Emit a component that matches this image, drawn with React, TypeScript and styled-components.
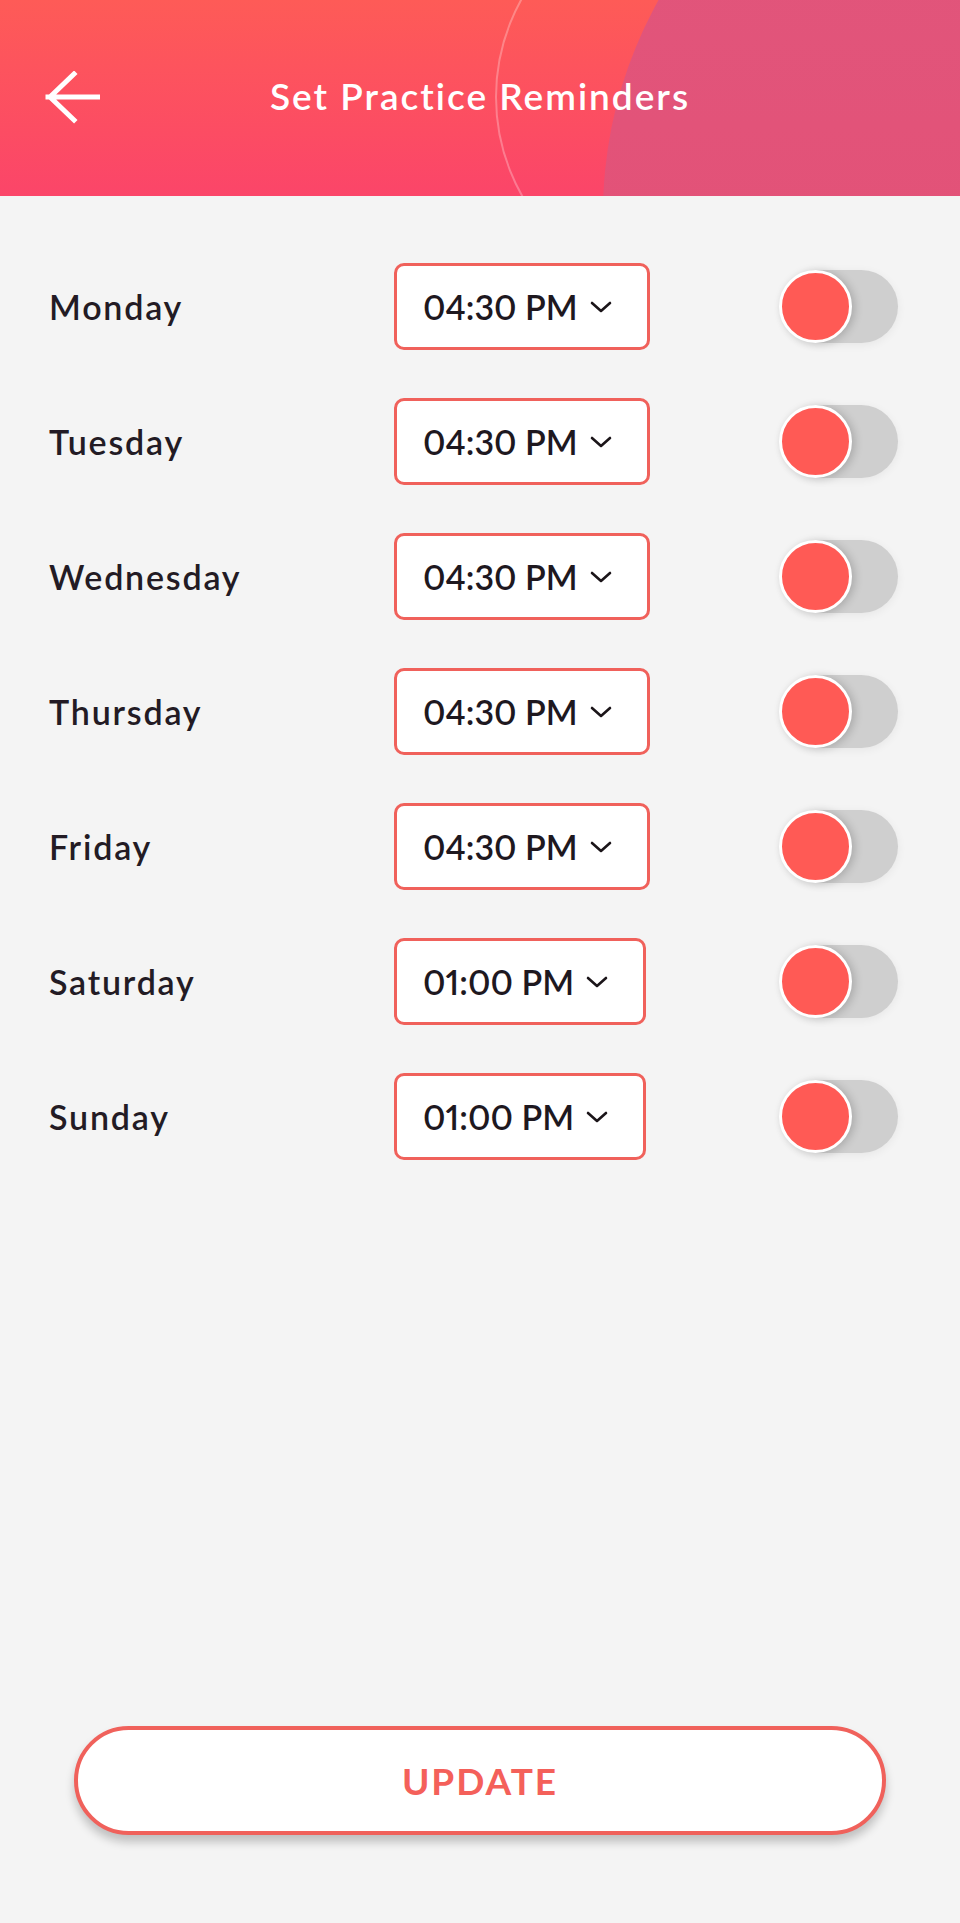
import React, { useState } from 'react'
import styled, { createGlobalStyle } from 'styled-components'

const GlobalStyle = createGlobalStyle`
  html, body {
    margin: 0;
    padding: 0;
    background: #f4f4f4;
  }
  * {
    box-sizing: border-box;
  }
`

type Reminder = {
  day: string
  time: string
  on: boolean
}

const initialReminders: Reminder[] = [
  { day: 'Monday', time: '04:30 PM', on: false },
  { day: 'Tuesday', time: '04:30 PM', on: false },
  { day: 'Wednesday', time: '04:30 PM', on: false },
  { day: 'Thursday', time: '04:30 PM', on: false },
  { day: 'Friday', time: '04:30 PM', on: false },
  { day: 'Saturday', time: '01:00 PM', on: false },
  { day: 'Sunday', time: '01:00 PM', on: false },
]

const BackArrow: React.FC = () => (
  <svg width="56" height="56" viewBox="0 0 56 56" fill="none">
    <path
      d="M54 26H4M30 3L6 26L30 49"
      stroke="#fff"
      strokeWidth="5"
      strokeLinecap="square"
      strokeLinejoin="miter"
    />
  </svg>
)

const Chevron: React.FC = () => (
  <svg width="22" height="12" viewBox="0 0 22 12" fill="none">
    <path d="M2 2L11 10L20 2" stroke="#1b1519" strokeWidth="2.6" strokeLinecap="round" strokeLinejoin="round" />
  </svg>
)

const HeaderArt: React.FC = () => (
  <ArtLayer width="960" height="196" viewBox="0 0 960 196" preserveAspectRatio="none">
    <defs>
      <linearGradient id="blob" x1="0" y1="0" x2="0" y2="1">
        <stop offset="0" stopColor="#e0577d" />
        <stop offset="1" stopColor="#e54d73" />
      </linearGradient>
    </defs>
    <circle cx="696" cy="97" r="200" stroke="rgba(255,255,255,0.28)" strokeWidth="2" fill="none" />
    <circle cx="1039" cy="213" r="436" fill="url(#blob)" />
  </ArtLayer>
)

export default function App() {
  const [reminders, setReminders] = useState<Reminder[]>(initialReminders)

  const toggle = (index: number) => {
    setReminders(list => list.map((r, i) => (i === index ? { ...r, on: !r.on } : r)))
  }

  return (
    <Page>
      <GlobalStyle />

      <Header>
        <HeaderArt />
        <BackButton aria-label="Back">
          <BackArrow />
        </BackButton>
        <Title>Set Practice Reminders</Title>
        <span />
      </Header>

      <List>
        {reminders.map((r, i) => (
          <Row key={r.day}>
            <DayLabel>{r.day}</DayLabel>
            <TimeSelect>
              <TimeText>{r.time}</TimeText>
              <Chevron />
            </TimeSelect>
            <Switch onClick={() => toggle(i)} $on={r.on} aria-label={`Toggle ${r.day}`}>
              <Knob $on={r.on} />
            </Switch>
          </Row>
        ))}
      </List>

      <Footer>
        <UpdateButton>UPDATE</UpdateButton>
      </Footer>
    </Page>
  )
}

const Page = styled.div`
  min-height: 100vh;
  display: flex;
  flex-direction: column;
  background: #f4f4f4;
  font-family: Lato, 'Open Sans', sans-serif;
`

const Header = styled.header`
  position: relative;
  height: 196px;
  overflow: hidden;
  display: grid;
  grid-template-columns: 1fr auto 1fr;
  align-items: center;
  background: linear-gradient(180deg, #fe5b57 0%, #fb4569 100%);
`

const ArtLayer = styled.svg`
  position: absolute;
  inset: 0;
  pointer-events: none;
`

const BackButton = styled.button`
  position: relative;
  justify-self: start;
  margin-left: 44px;
  margin-top: 2px;
  padding: 0;
  border: none;
  background: none;
  display: flex;
  cursor: pointer;
`

const Title = styled.h1`
  position: relative;
  margin: 0 0 6px;
  color: #fff;
  font-size: 37px;
  font-weight: 600;
  letter-spacing: 2px;
`

const List = styled.div`
  display: flex;
  flex-direction: column;
  gap: 48px;
  padding-top: 67px;
`

const Row = styled.div`
  display: flex;
  align-items: center;
  height: 87px;
  padding-left: 49px;
  padding-right: 62px;
`

const DayLabel = styled.span`
  width: 345px;
  color: #231b24;
  font-size: 34px;
  font-weight: 600;
  letter-spacing: 1.8px;
`

const TimeSelect = styled.div`
  display: flex;
  align-items: center;
  gap: 12px;
  height: 87px;
  padding: 0 35px 0 26px;
  background: #fff;
  border: 3px solid #f0615b;
  border-radius: 10px;
`

const TimeText = styled.span`
  color: #1e181f;
  font-size: 34px;
  font-weight: 600;
  letter-spacing: 0;
  font-variant-numeric: proportional-nums;
`

const Switch = styled.button<{ $on: boolean }>`
  position: relative;
  margin-left: auto;
  width: 116px;
  height: 73px;
  padding: 0;
  border: none;
  border-radius: 37px;
  background: ${p => (p.$on ? '#f7a3a0' : '#cfcfcf')};
  box-shadow: 0 2px 10px rgba(0, 0, 0, 0.06);
  cursor: pointer;
`

const Knob = styled.span<{ $on: boolean }>`
  position: absolute;
  top: 0;
  left: ${p => (p.$on ? '44px' : '-3px')};
  width: 73px;
  height: 73px;
  border-radius: 50%;
  background: #ff5a55;
  border: 3px solid #fff;
  box-shadow: 3px 1px 8px rgba(0, 0, 0, 0.18);
`

const Footer = styled.div`
  margin-top: auto;
  padding: 0 74px 88px;
`

const UpdateButton = styled.button`
  width: 100%;
  height: 109px;
  background: #fff;
  border: 4px solid #f0615b;
  border-radius: 55px;
  box-shadow: 0 7px 10px rgba(0, 0, 0, 0.22);
  color: #f4605a;
  font-family: Lato, 'Open Sans', sans-serif;
  font-size: 37px;
  font-weight: 700;
  letter-spacing: 2px;
  cursor: pointer;
`
